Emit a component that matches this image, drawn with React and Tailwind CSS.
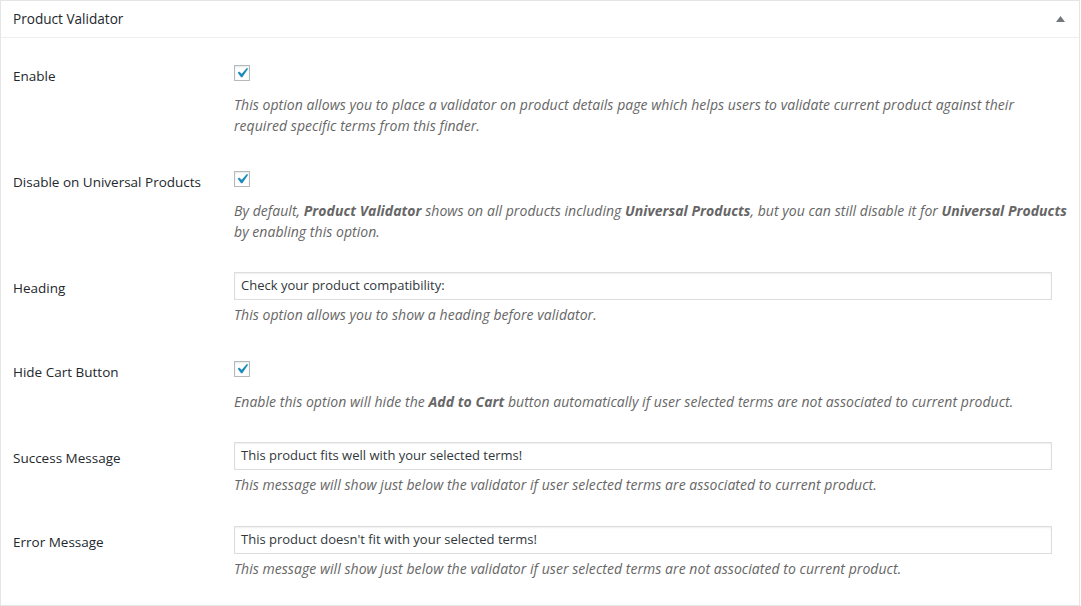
import React from 'react';

const Checkbox = () => (
    <span className="relative mt-[5px] block h-4 w-4 border border-[#b4b9be] bg-white shadow-[inset_0_1px_2px_rgba(0,0,0,0.1)]">
        <svg className="absolute left-[-3px] top-[-3px]" width="20" height="20" viewBox="0 0 20 20">
            <path d="M14.83 4.89l1.34.94-5.81 8.38H9.02L5.78 9.67l1.34-1.25 2.57 2.4z" fill="#1e8cbe" />
        </svg>
    </span>
);

const TextInput = ({ value }) => (
    <div className="flex h-[28px] w-[818px] items-center border border-[#ddd] bg-white px-[6px] text-[13px] text-[#32373c] shadow-[inset_0_1px_2px_rgba(0,0,0,0.07)]">
        {value}
    </div>
);

const Desc = ({ children, className = '' }) => (
    <p className={`text-[14px] italic leading-[21px] tracking-[0.05px] text-[#666] ${className}`}>{children}</p>
);

const Row = ({ label, children, input }) => (
    <div className="flex">
        <div className="w-[221px] shrink-0 pt-[21px] text-[13.5px] leading-[20px] text-[#23282d]">{label}</div>
        <div className={`w-[836px] pt-[15px] ${input ? 'pb-[16px]' : 'pb-[15px]'}`}>{children}</div>
    </div>
);

export default function App() {
    return (
        <div className="min-h-[606px] bg-white" style={{ fontFamily: '"Open Sans", "Noto Sans", sans-serif' }}>
            <div className="w-[1080px] border border-[#e5e5e5] bg-white">
                <div className="flex h-[37px] items-center justify-between border-b border-[#eee] pl-[12px] pr-[14px]">
                    <h2 className="text-[13.6px] text-[#23282d]">Product Validator</h2>
                    <svg width="9" height="6" viewBox="0 0 9 6">
                        <path d="M4.5 0L9 6H0z" fill="#72777c" />
                    </svg>
                </div>
                <div className="pl-[12px] pt-[7px] pb-[10px]">
                    <Row label="Enable">
                        <Checkbox />
                        <Desc className="mt-[13px]">
                            This option allows you to place a validator on product details page which helps users to validate current product against their required specific terms from this finder.
                        </Desc>
                    </Row>
                    <Row label="Disable on Universal Products">
                        <Checkbox />
                        <Desc className="mt-[13px]">
                            By default, <b className="font-bold">Product Validator</b> shows on all products including <b className="font-bold">Universal Products</b>, but you can still disable it for <b className="font-bold">Universal Products</b> by enabling this option.
                        </Desc>
                    </Row>
                    <Row label="Heading" input>
                        <TextInput value="Check your product compatibility:" />
                        <Desc className="mt-[4px]">This option allows you to show a heading before validator.</Desc>
                    </Row>
                    <Row label="Hide Cart Button">
                        <Checkbox />
                        <Desc className="mt-[14px]">
                            Enable this option will hide the <b className="font-bold">Add to Cart</b> button automatically if user selected terms are not associated to current product.
                        </Desc>
                    </Row>
                    <Row label="Success Message" input>
                        <TextInput value="This product fits well with your selected terms!" />
                        <Desc className="mt-[4px]">This message will show just below the validator if user selected terms are associated to current product.</Desc>
                    </Row>
                    <Row label="Error Message" input>
                        <TextInput value="This product doesn't fit with your selected terms!" />
                        <Desc className="mt-[4px]">This message will show just below the validator if user selected terms are not associated to current product.</Desc>
                    </Row>
                </div>
            </div>
        </div>
    );
}
